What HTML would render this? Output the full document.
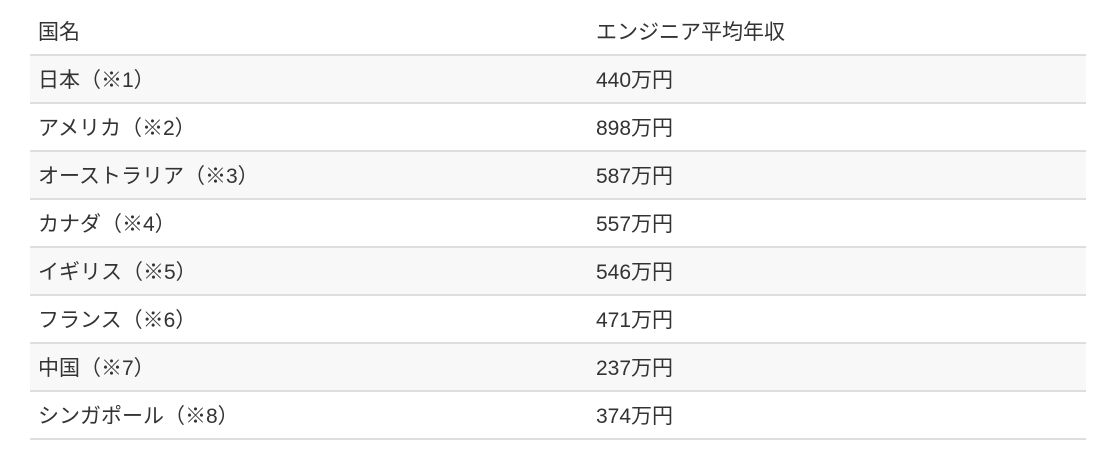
<!DOCTYPE html>
<html><head><meta charset="utf-8"><style>
body{margin:0;background:#fff;font-family:"Liberation Sans","Noto Sans CJK JP",sans-serif;color:#333;}
table{position:absolute;left:30px;top:8px;width:1056px;border-collapse:collapse;font-size:21px;}
td,th{font-weight:normal;text-align:left;height:46px;padding:0 0 0 8px;border-bottom:2px solid #dedede;vertical-align:middle;}
tr:nth-child(even) td{background:#f8f8f8;}
col.a{width:558px}
</style></head><body>
<table><colgroup><col class="a"><col></colgroup>
<tr><th>国名</th><th>エンジニア平均年収</th></tr>
<tr><td>日本（※1）</td><td>440万円</td></tr>
<tr><td>アメリカ（※2）</td><td>898万円</td></tr>
<tr><td>オーストラリア（※3）</td><td>587万円</td></tr>
<tr><td>カナダ（※4）</td><td>557万円</td></tr>
<tr><td>イギリス（※5）</td><td>546万円</td></tr>
<tr><td>フランス（※6）</td><td>471万円</td></tr>
<tr><td>中国（※7）</td><td>237万円</td></tr>
<tr><td>シンガポール（※8）</td><td>374万円</td></tr>
</table>
</body></html>
